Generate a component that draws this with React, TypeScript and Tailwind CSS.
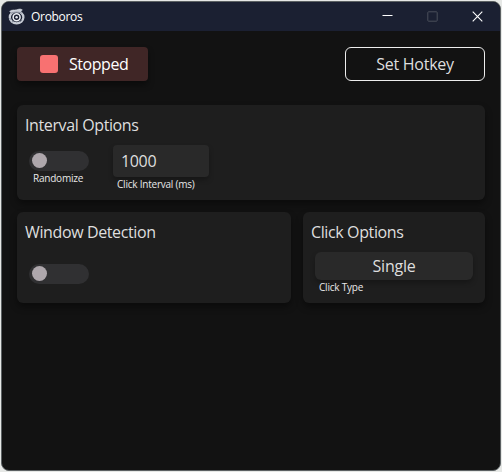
import type { ReactNode } from 'react';

function Serpent() {
  return (
    <svg className="h-[17px] w-[17px]" viewBox="0 0 17 17" fill="none">
      <path d="M1.600 3.400C4 1.400 6 2.400 8.600 1.800C10.600 1.300 12 .3 14.300 1.800L12.800 3.800C9.500 2.800 5.500 3 3 4.600Z" fill="#c9ced7" stroke="#dfe3ea" strokeWidth=".5" />
      <ellipse cx="8.600" cy="9.300" rx="6.800" ry="6" stroke="#c6cbd4" strokeWidth="2.300" />
      <path d="M3 5.200C6 3.900 10 3.700 13.800 5" stroke="#7d8391" strokeWidth=".8" />
      <circle cx="8.600" cy="9.300" r="3.500" stroke="#edf0f5" strokeWidth="1.500" />
      <circle cx="8.600" cy="9.300" r="1.200" fill="#e5e8ef" />
      <path d="M1.500 10l2 2M4 14l2-1M12 14l2-2" stroke="#6e7585" strokeWidth=".8" />
    </svg>
  );
}

function Panel({ className, title, children }: { className: string; title: string; children: ReactNode }) {
  return (
    <section className={`rounded-md bg-[#1e1e1e] px-2 pt-2 shadow-[0_4px_7px_rgba(0,0,0,0.4)] ${className}`}>
      <h2 className="h-6 whitespace-nowrap text-[16px] leading-6 tracking-[-0.38px]">{title}</h2>
      {children}
    </section>
  );
}

function Toggle() {
  return (
    <button className="flex h-5 w-[60px] items-center rounded-full bg-[#303032] pl-[3px]">
      <span className="mt-[-1px] h-[15px] w-[15px] rounded-full bg-[#aea7ac]" />
    </button>
  );
}

function Caption({ children }: { children: ReactNode }) {
  return <div className="whitespace-nowrap pl-1 text-[10px] leading-[15px] tracking-[-0.22px] text-[#e8e8e8]">{children}</div>;
}

export default function App() {
  return (
    <div className="h-[472px] w-[502px] bg-[#e6e8e6] p-px font-['Open_Sans','Noto_Sans',sans-serif] text-[#dedede]">
      <div className="flex h-[470px] w-[500px] flex-col overflow-hidden rounded-[8px] border border-[#5c6163] bg-[#121212]">
        <header className="flex h-[29px] shrink-0 items-center bg-[#1b2032] pl-[6px] pr-[17px] text-white">
          <Serpent />
          <span className="ml-[6px] text-[12px] leading-4 tracking-[-0.3px]">Oroboros</span>
          <div className="ml-auto flex items-center gap-[34px]">
            <svg className="h-[11px] w-[11px]" viewBox="0 0 11 11"><path d="M.5 4.500h10" stroke="#fff" /></svg>
            <svg className="h-[11px] w-[11px]" viewBox="0 0 11 11" fill="none"><rect x=".8" y=".8" width="9.400" height="9.400" rx=".8" stroke="#4b4f5b" /></svg>
            <svg className="h-[11px] w-[11px]" viewBox="0 0 11 11"><path d="M.7.7l9.600 9.600M10.300.7L.7 10.300" stroke="#fff" strokeWidth="1.100" /></svg>
          </div>
        </header>
        <main className="flex-1 px-[15px] pt-4">
          <div className="flex w-[468px] justify-between">
            <button className="flex h-[34px] w-[131px] items-center rounded bg-[#402626] pl-[23px] text-[16px] text-white shadow-[0_4px_6px_rgba(0,0,0,0.4)]">
              <span className="h-[18px] w-[18px] rounded-[3px] bg-[#f87171]" />
              <span className="ml-[11px] tracking-[-0.45px]">Stopped</span>
            </button>
            <button className="h-[34px] w-[140px] rounded-md border border-[#ededed] text-[16px] tracking-[-0.25px]">Set Hotkey</button>
          </div>
          <Panel className="mt-6 h-[95px] w-[468px]" title="Interval Options">
            <div className="flex gap-6 pl-1">
              <div className="pt-[14px]">
                <Toggle />
                <Caption>Randomize</Caption>
              </div>
              <div className="pt-2">
                <input className="block h-8 w-24 rounded bg-[#292929] px-2 text-[16px] tracking-[-0.35px] shadow-[0_3px_5px_rgba(0,0,0,0.25)] outline-none" defaultValue="1000" />
                <Caption>Click Interval (ms)</Caption>
              </div>
            </div>
          </Panel>
          <div className="mt-3 flex w-[468px] gap-3">
            <Panel className="h-[91px] w-[274px]" title="Window Detection">
              <div className="pl-1 pt-5"><Toggle /></div>
            </Panel>
            <Panel className="h-[91px] w-[182px] shrink-0" title="Click Options">
              <div className="px-1 pt-2">
                <button className="block h-7 w-[158px] rounded-md bg-[#292929] text-[16px] leading-[29px] tracking-[-0.25px] shadow-[0_3px_5px_rgba(0,0,0,0.25)]">Single</button>
                <Caption>Click Type</Caption>
              </div>
            </Panel>
          </div>
        </main>
      </div>
    </div>
  );
}
